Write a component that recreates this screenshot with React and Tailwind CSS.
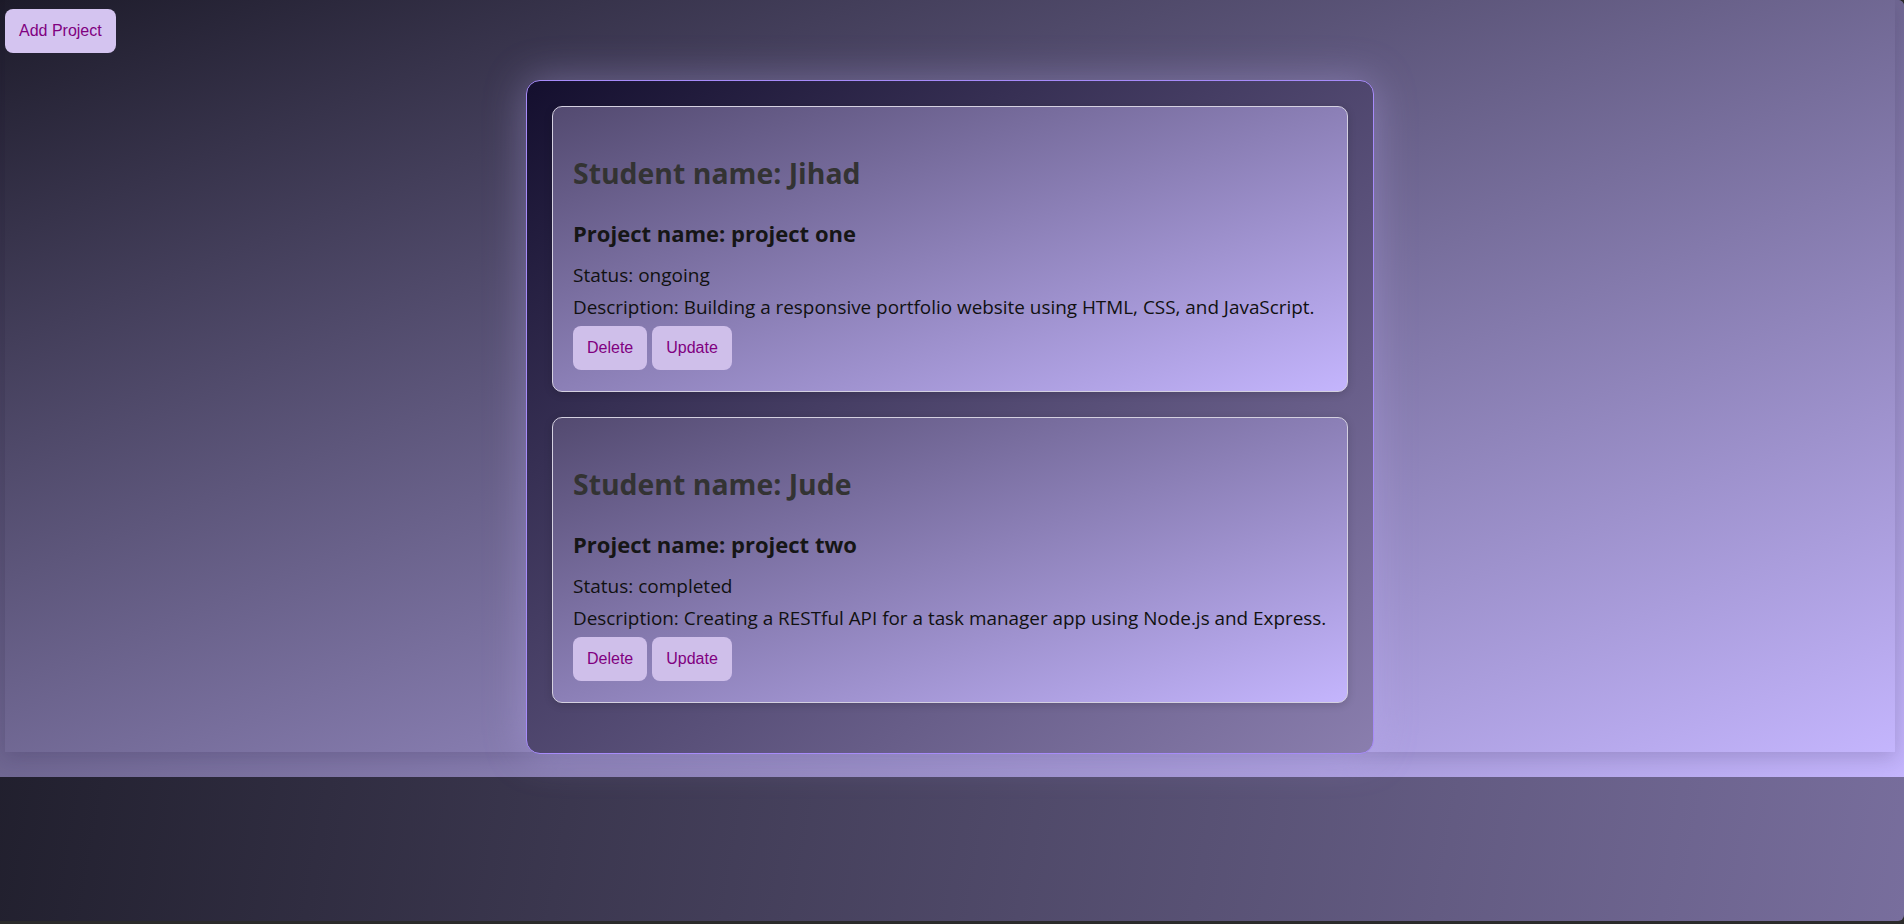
const projects = [
  {
    id: 1,
    student: "Jihad",
    name: "project one",
    status: "ongoing",
    description: "Building a responsive portfolio website using HTML, CSS, and JavaScript.",
  },
  {
    id: 2,
    student: "Jude",
    name: "project two",
    status: "completed",
    description: "Creating a RESTful API for a task manager app using Node.js and Express.",
  },
];

const btn =
  "px-[13px] py-3 rounded-lg border border-transparent text-[16px] leading-[18px] text-[#800080] font-['Liberation_Sans',Arial,sans-serif] cursor-pointer";

function ProjectItem({ project }) {
  return (
    <div className="mb-[25px] rounded-[10px] border border-[#d4d0e0] bg-[linear-gradient(to_bottom_right,#534a70,#c4b5fd)] p-5 shadow-[0_2px_8px_rgba(0,0,0,0.15)] font-['Open_Sans','Noto_Sans',sans-serif]">
      <h2 className="mt-[27px] text-[28.4px] leading-[38px] font-bold text-[#333]">Student name: {project.student}</h2>
      <h3 className="mt-[26px] text-[22px] leading-[30px] font-bold text-[#161616]">Project name: {project.name}</h3>
      <p className="mt-[14px] text-[19px] leading-[26px] text-[#111]">Status: {project.status}</p>
      <p className="mt-[6px] whitespace-nowrap text-[18.9px] leading-[26px] text-[#111]">Description: {project.description}</p>
      <div className="mt-[6px] mb-[1px] flex gap-[5px]">
        <button className={`${btn} bg-[#cfbfea]`}>Delete</button>
        <button className={`${btn} bg-[#cfbfea]`}>Update</button>
      </div>
    </div>
  );
}

export default function App() {
  return (
    <div className="h-screen bg-[#2b2b2b]">
      <div className="h-[921px] overflow-hidden rounded-tr-md rounded-br-md bg-[linear-gradient(100deg,#1b1a26,#786e9d)]">
        <div className="h-[777px] pl-[5px] pr-[9px] bg-[linear-gradient(to_bottom_right,#1c1a28,#c4b5fd)]">
          <div className="h-[752px] flex flex-col bg-[linear-gradient(to_bottom_right,#1d1b2a,#c4b5fd)] shadow-[0_6px_18px_rgba(40,30,70,0.18)]">
            <div>
              <button className={`${btn} mt-[9px] bg-[#d4c4f0]`}>Add Project</button>
            </div>
            <div className="mx-auto mt-[27px] w-[848px] rounded-[14px] border-[1.5px] border-[#a78bfa] bg-[linear-gradient(to_bottom_right,#140f2e,#8a7eae)] px-[25px] pt-[25px] pb-[25px] shadow-[0_0_40px_rgba(196,181,253,0.35)]">
              {projects.map((p) => (
                <ProjectItem key={p.id} project={p} />
              ))}
            </div>
          </div>
        </div>
      </div>
    </div>
  );
}
